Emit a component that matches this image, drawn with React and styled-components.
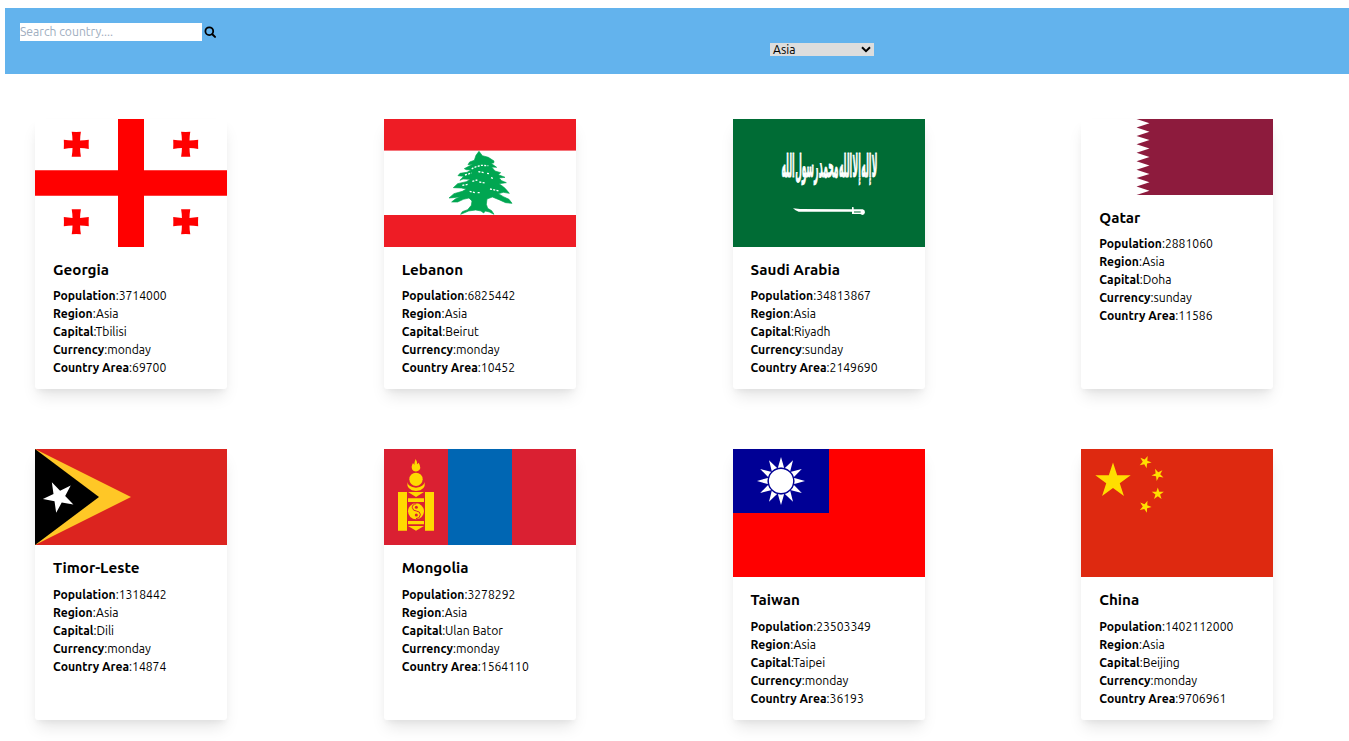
import React from 'react';
import styled, { createGlobalStyle } from 'styled-components';

const GlobalStyle = createGlobalStyle`
  *, *::before, *::after { box-sizing: border-box; }
  html { font-size: 12px; }
  body {
    margin: 0;
    background: #fff;
    color: #000;
    font-family: Ubuntu, "Noto Sans", sans-serif;
    line-height: 1.5;
    overflow: hidden;
  }
`;

const Page = styled.main`
  height: 741px;
  padding: 8px 0 0 5px;
  overflow: hidden;
`;

const Toolbar = styled.header`
  display: flex;
  align-items: flex-start;
  height: 66px;
  padding: 15px 0 0 15px;
  background: #63b3ed;
`;

const SearchForm = styled.div`
  display: flex;
  align-items: center;
  gap: 2px;
  width: 750px;
`;

const SearchInput = styled.input`
  width: 182px;
  height: 18px;
  padding: 0;
  border: 0;
  border-radius: 0;
  background: #fff;
  font: inherit;
  font-size: 12.15px;
  line-height: 18px;
  &::placeholder { color: #a0aec0; opacity: 1; }
`;

const SearchIcon = styled.svg`
  display: block;
  width: 12px;
  height: 12px;
`;

const RegionSelect = styled.button`
  display: flex;
  align-items: center;
  justify-content: space-between;
  width: 104px;
  height: 13px;
  margin-top: 20px;
  padding: 0 3px;
  border: 0;
  border-radius: 0;
  background: #ddd;
  color: #000;
  font: inherit;
  font-size: 12.2px;
  line-height: 13px;
`;

const Chevron = styled.svg`
  display: block;
  width: 10px;
  height: 7px;
`;

const CardGrid = styled.section`
  display: grid;
  grid-template-columns: repeat(4, 288.75px);
  gap: 60px;
  padding: 44.8px 0 0 30px;
`;

const Card = styled.article`
  width: 192px;
  border-radius: 3px;
  box-shadow: 0 10px 15px -3px rgba(0, 0, 0, 0.1), 0 4px 6px -2px rgba(0, 0, 0, 0.05);
`;

const Flag = styled.svg`
  display: block;
  width: 192px;
  height: ${(p) => p.$height}px;
`;

const CardBody = styled.div`
  padding: 12px 18px;
`;

const CountryName = styled.h2`
  margin: 0 0 6px;
  font-size: 15.2px;
  line-height: 22.5px;
  font-weight: 700;
  white-space: nowrap;
`;

const Fact = styled.p`
  margin: 0;
  font-size: 12.15px;
  line-height: 18px;
  white-space: nowrap;
`;

const FactLabel = styled.b`
  font-weight: 700;
`;

const star = (cx, cy, r, turn = 0) =>
  Array.from({ length: 10 }, (_, i) => {
    const a = ((i * 36 - 90 + turn) * Math.PI) / 180;
    const d = i % 2 ? r * 0.382 : r;
    return `${(cx + d * Math.cos(a)).toFixed(2)},${(cy + d * Math.sin(a)).toFixed(2)}`;
  }).join(' ');

const Georgia = () => (
  <Flag $height={128} viewBox="0 0 192 128">
    <rect width="192" height="128" fill="#fff" />
    <path d="M83 0h26v128H83zM0 51.2h192v25.6H0z" fill="#f00" />
    {[[41.3, 25.3], [150.7, 25.3], [41.3, 102.7], [150.7, 102.7]].map(([x, y]) => (
      <path
        key={`${x}-${y}`}
        transform={`translate(${x} ${y})`}
        fill="#f00"
        d="M-4.6-12.5Q0-12.2 4.6-12.5Q3.8-8 3.8-3.8Q8-3.8 12.5-4.6Q12.2 0 12.5 4.6Q8 3.8 3.8 3.8Q3.8 8 4.6 12.5Q0 12.2-4.6 12.5Q-3.8 8-3.8 3.8Q-8 3.8-12.5 4.6Q-12.2 0-12.5-4.6Q-8-3.8-3.8-3.8Q-3.8-8-4.6-12.5z"
      />
    ))}
  </Flag>
);

const Lebanon = () => (
  <Flag $height={128} viewBox="0 0 192 128">
    <rect width="192" height="128" fill="#ee1c25" />
    <rect y="31.6" width="192" height="64.4" fill="#fff" />
    <g transform="translate(-9 -14) scale(.33333)">
      <path
        fill="#00a651"
        stroke="#00a651"
        strokeWidth="2"
        d="M312 139L322 152L340 157L357 168L356 174L348 175L365 187L350 186L360 198L377 203L370 209L390 217L372 219L380 227L394 233L372 236L386 246L393 253L403 265L385 262L370 266L385 275L402 283L411 295L392 293L372 284L352 276L336 282L334 298L338 310L350 317L357 328L343 321L331 318L326 324L318 318L302 315L281 318L257 328L262 320L278 314L289 301L291 288L282 279L265 283L248 291L230 291L241 282L255 275L235 278L222 279L237 266L262 259L274 252L259 249L235 248L248 236L274 230L286 223L264 222L255 226L266 214L249 212L255 205L276 202L288 195L274 194L268 191L281 184L294 178L279 179L284 171L298 166L303 151z"
      />
      <path
        fill="none"
        stroke="#fff"
        strokeWidth="4"
        strokeDasharray="6 4"
        d="M290 192L298 187L318 181L340 182M270 210L290 204M310 200L328 203M336 205L345 206M292 229L307 225M313 231L330 234M284 259L300 263M308 263L318 263M345 252L372 258M262 241L280 238M348 218L356 221"
      />
    </g>
  </Flag>
);

const SaudiArabia = () => (
  <Flag $height={128} viewBox="0 0 192 128">
    <rect width="192" height="128" fill="#006c35" />
    <text
      transform="translate(96.5 58) scale(.8 2.3)"
      fill="#fff"
      stroke="#fff"
      strokeWidth=".4"
      fontFamily="DejaVu Sans"
      fontWeight="700"
      fontSize="14"
      wordSpacing="-4"
      direction="rtl"
      textAnchor="middle"
      textLength="120"
      lengthAdjust="spacingAndGlyphs"
    >
      لا إله إلا الله محمد رسول الله
    </text>
    <g transform="translate(-13 -14) scale(.33333)" fill="#fff">
      <path d="M219 310L240 312L396 313V306L401 307V313L428 313Q435 315 435 322Q434 330 427 330L421 327H396V320H236Q226 317 219 310z" />
      <path d="M402 321h20" stroke="#006c35" strokeWidth="3" />
    </g>
  </Flag>
);

const Qatar = () => (
  <Flag $height={76} viewBox="0 0 192 76" preserveAspectRatio="none">
    <rect width="192" height="76" fill="#fff" />
    <path
      fill="#8d1b3d"
      d={`M192 0H55.5${Array.from({ length: 9 }, (_, i) => `L68.5 ${((i + 0.5) * 8.444).toFixed(2)}L55.5 ${((i + 1) * 8.444).toFixed(2)}`).join('')}H192z`}
    />
  </Flag>
);

const TimorLeste = () => (
  <Flag $height={96} viewBox="0 0 192 96">
    <rect width="192" height="96" fill="#dc241f" />
    <path d="M0 0L96 48L0 96z" fill="#ffc726" />
    <path d="M0 0L64 48L0 96z" />
    <polygon points={star(24, 47.8, 16.3, -26)} fill="#fff" />
  </Flag>
);

const Mongolia = () => (
  <Flag $height={96} viewBox="0 0 192 96">
    <rect width="192" height="96" fill="#da2032" />
    <rect x="64" width="64" height="96" fill="#0066b3" />
    <g transform="translate(-9 -9) scale(.33333)" fill="#ffd900">
      <path d="M69 156h27v116H69zM150 156h27v116h-27zM99 156h48l-24 15zM99 175h48v11H99zM99 243h48v10H99zM99 258h48l-24 14z" />
      <path d="M122 57Q128 67 126 73L131 68Q141 85 130 92Q123 97 115 92Q105 84 114 69L118 74Q118 66 122 57z" />
      <circle cx="123" cy="118" r="20" />
      <path d="M97 126Q98 140 123 143Q147 140 149 126Q153 151 123 153Q94 151 97 126z" />
      <circle cx="123" cy="214" r="24" />
      <path d="M124 191Q111 193 112 203Q114 213 124 213Q136 214 136 224Q135 236 123 236" fill="none" stroke="#da2032" strokeWidth="3" />
      <circle cx="124" cy="202" r="4.5" fill="#da2032" />
      <circle cx="124" cy="225" r="4.5" fill="#da2032" />
    </g>
  </Flag>
);

const Taiwan = () => (
  <Flag $height={128} viewBox="0 0 192 128">
    <rect width="192" height="128" fill="#f00" />
    <rect width="96" height="64" fill="#000095" />
    <g fill="#fff" transform="translate(48 32)">
      {Array.from({ length: 12 }, (_, i) => (
        <path key={i} transform={`rotate(${i * 30})`} d="M0-24L3.3-12.5Q0-14-3.3-12.5z" />
      ))}
      <circle r="12.8" stroke="#000095" strokeWidth="1.4" />
    </g>
  </Flag>
);

const China = () => (
  <Flag $height={128} viewBox="0 0 192 128">
    <rect width="192" height="128" fill="#de2910" />
    <g fill="#ffde00">
      <polygon points={star(32, 32, 18.6)} />
      <polygon points={star(64.2, 12.9, 6.4, 23)} />
      <polygon points={star(76.8, 25.6, 6.4, 46)} />
      <polygon points={star(76.8, 44.8, 6.4, 0)} />
      <polygon points={star(64.2, 57.6, 6.4, 21)} />
    </g>
  </Flag>
);

const countries = [
  { name: 'Georgia', flag: Georgia, population: 3714000, capital: 'Tbilisi', currency: 'monday', area: 69700 },
  { name: 'Lebanon', flag: Lebanon, population: 6825442, capital: 'Beirut', currency: 'monday', area: 10452 },
  { name: 'Saudi Arabia', flag: SaudiArabia, population: 34813867, capital: 'Riyadh', currency: 'sunday', area: 2149690 },
  { name: 'Qatar', flag: Qatar, population: 2881060, capital: 'Doha', currency: 'sunday', area: 11586 },
  { name: 'Timor-Leste', flag: TimorLeste, population: 1318442, capital: 'Dili', currency: 'monday', area: 14874 },
  { name: 'Mongolia', flag: Mongolia, population: 3278292, capital: 'Ulan Bator', currency: 'monday', area: 1564110 },
  { name: 'Taiwan', flag: Taiwan, population: 23503349, capital: 'Taipei', currency: 'monday', area: 36193 },
  { name: 'China', flag: China, population: 1402112000, capital: 'Beijing', currency: 'monday', area: 9706961 },
];

function CountryCard({ country }) {
  const FlagArt = country.flag;
  const facts = [
    ['Population', country.population],
    ['Region', 'Asia'],
    ['Capital', country.capital],
    ['Currency', country.currency],
    ['Country Area', country.area],
  ];
  return (
    <Card>
      <FlagArt />
      <CardBody>
        <CountryName>{country.name}</CountryName>
        {facts.map(([label, value]) => (
          <Fact key={label}>
            <FactLabel>{label}</FactLabel>:{value}
          </Fact>
        ))}
      </CardBody>
    </Card>
  );
}

export default function App() {
  return (
    <>
      <GlobalStyle />
      <Page>
        <Toolbar>
          <SearchForm>
            <SearchInput placeholder="Search country...." />
            <SearchIcon viewBox="0 0 12 12" fill="none" stroke="#000">
              <circle cx="5.3" cy="5.2" r="3.9" strokeWidth="1.8" />
              <path d="M8.3 8.2L11 10.9" strokeWidth="2" strokeLinecap="round" />
            </SearchIcon>
          </SearchForm>
          <RegionSelect type="button" aria-haspopup="listbox">
            Asia
            <Chevron viewBox="0 0 10 7" fill="none" stroke="#000" strokeWidth="2">
              <path d="M1 1.3L5 5.2L9 1.3" />
            </Chevron>
          </RegionSelect>
        </Toolbar>
        <CardGrid>
          {countries.map((country) => (
            <CountryCard key={country.name} country={country} />
          ))}
        </CardGrid>
      </Page>
    </>
  );
}
